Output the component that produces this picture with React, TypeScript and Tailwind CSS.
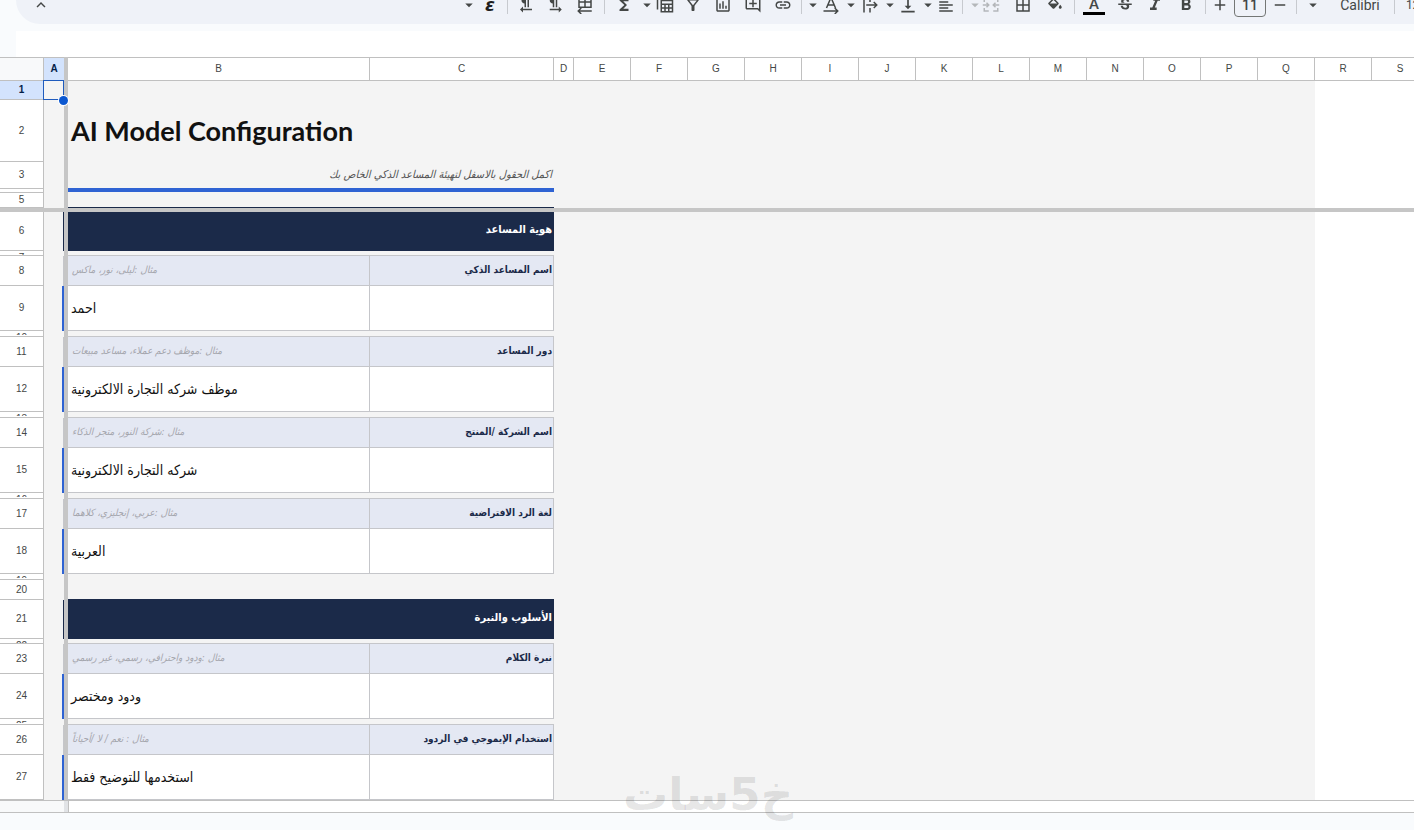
import type { ReactNode } from 'react';
import clsx from 'clsx';
import {
  MdAdd,
  MdArrowDropDown,
  MdBorderAll,
  MdFormatAlignRight,
  MdFormatBold,
  MdFormatItalic,
  MdFormatTextdirectionLToR,
  MdFormatTextdirectionRToL,
  MdFunctions,
  MdKeyboardArrowUp,
  MdLink,
  MdOutlineAddComment,
  MdOutlineFilterAlt,
  MdOutlineInsertChart,
  MdRemove,
  MdStrikethroughS,
  MdVerticalAlignBottom
} from 'react-icons/md';

type RowKind = 'blank' | 'title' | 'subtitle' | 'rule' | 'preSection' | 'section' | 'preHint' | 'hint' | 'value';

type SheetRow = {
  n: number;
  h: string;
  kind: RowKind;
  text?: string;
  label?: string;
};

const frozenRows: SheetRow[] = [
  { n: 1, h: 'h-[19px]', kind: 'blank' },
  { n: 2, h: 'h-[62px]', kind: 'title', text: 'AI Model Configuration' },
  { n: 3, h: 'h-[27px]', kind: 'subtitle', text: 'اكمل الحقول بالاسفل لتهيئة المساعد الذكي الخاص بك' },
  { n: 4, h: 'h-1', kind: 'rule' },
  { n: 5, h: 'h-[15px]', kind: 'preSection' }
];

const bodyRows: SheetRow[] = [
  { n: 6, h: 'h-[39px]', kind: 'section', text: 'هوية المساعد' },
  { n: 7, h: 'h-[5px]', kind: 'preHint' },
  { n: 8, h: 'h-[30px]', kind: 'hint', text: 'مثال :ليلى، نور، ماكس', label: 'اسم المساعد الذكي' },
  { n: 9, h: 'h-[45px]', kind: 'value', text: 'احمد' },
  { n: 10, h: 'h-1.5', kind: 'preHint' },
  { n: 11, h: 'h-[30px]', kind: 'hint', text: 'مثال :موظف دعم عملاء، مساعد مبيعات', label: 'دور المساعد' },
  { n: 12, h: 'h-[45px]', kind: 'value', text: 'موظف شركه التجارة الالكترونية' },
  { n: 13, h: 'h-1.5', kind: 'preHint' },
  { n: 14, h: 'h-[30px]', kind: 'hint', text: 'مثال :شركة النور، متجر الذكاء', label: 'اسم الشركة /المنتج' },
  { n: 15, h: 'h-[45px]', kind: 'value', text: 'شركه التجارة الالكترونية' },
  { n: 16, h: 'h-1.5', kind: 'preHint' },
  { n: 17, h: 'h-[30px]', kind: 'hint', text: 'مثال :عربي، إنجليزي، كلاهما', label: 'لغة الرد الافتراضية' },
  { n: 18, h: 'h-[45px]', kind: 'value', text: 'العربية' },
  { n: 19, h: 'h-1.5', kind: 'blank' },
  { n: 20, h: 'h-5', kind: 'preSection' },
  { n: 21, h: 'h-[39px]', kind: 'section', text: 'الأسلوب والنبرة' },
  { n: 22, h: 'h-[5px]', kind: 'preHint' },
  { n: 23, h: 'h-[30px]', kind: 'hint', text: 'مثال :ودود واحترافي، رسمي، غير رسمي', label: 'نبرة الكلام' },
  { n: 24, h: 'h-[45px]', kind: 'value', text: 'ودود ومختصر' },
  { n: 25, h: 'h-1.5', kind: 'preHint' },
  { n: 26, h: 'h-[30px]', kind: 'hint', text: 'مثال : نعم / لا /أحياناً', label: 'استخدام الإيموجي في الردود' },
  { n: 27, h: 'h-[45px]', kind: 'value', text: 'استخدمها للتوضيح فقط' }
];

const columns = 'EFGHIJKLMNOPQRS'.split('');

const arabic = "font-['DejaVu_Sans_Condensed','DejaVu_Sans',sans-serif]";

function Tool({ label, w, children }: { label: string; w: string; children: ReactNode }) {
  return (
    <button type="button" aria-label={label} className={clsx('flex h-7 shrink-0 items-center justify-center', w)}>
      {children}
    </button>
  );
}

function Divider({ w }: { w: string }) {
  return (
    <span className={clsx('flex h-[18px] shrink-0 justify-center', w)}>
      <span className="w-px bg-[#c7cacf]" />
    </span>
  );
}

function Arrow({ w, label, muted = false }: { w: string; label: string; muted?: boolean }) {
  return (
    <Tool label={label} w={w}>
      <MdArrowDropDown className={clsx('size-[18px] shrink-0', muted && 'text-[#b4b7ba]')} />
    </Tool>
  );
}

function Glyph({ children, muted = false }: { children: ReactNode; muted?: boolean }) {
  return (
    <svg
      viewBox="0 0 24 24"
      fill="none"
      stroke="currentColor"
      strokeWidth="2"
      className={clsx('size-[18px] shrink-0', muted && 'text-[#b4b7ba]')}
    >
      {children}
    </svg>
  );
}

function Toolbar() {
  const icon = 'size-[18px] shrink-0';
  return (
    <div className="ml-4 h-6 overflow-hidden rounded-bl-3xl bg-[#eff2f8] text-[#444746]">
      <div className="-mt-[9px] flex h-7 items-center">
        <div className="ml-4 shrink-0">
          <Tool label="Hide the menus" w="w-[18px]">
            <MdKeyboardArrowUp className="size-[18px]" />
          </Tool>
        </div>
        <div className="ml-[410px] flex shrink-0 items-center">
          <Arrow label="Input tools menu" w="w-[18px]" />
          <Tool label="Input tools" w="w-6">
            <span className="font-['DejaVu_Sans',sans-serif] text-lg font-bold italic leading-5 text-[#1f1f1f]">ε</span>
          </Tool>
          <Divider w="w-2.5" />
          <Tool label="Right to left" w="w-7">
            <MdFormatTextdirectionRToL className={icon} />
          </Tool>
          <Tool label="Left to right" w="w-[30px]">
            <MdFormatTextdirectionLToR className={icon} />
          </Tool>
          <Tool label="Sheet direction" w="w-[30px]">
            <Glyph>
              <path d="M4 0v15h16V0M4 8h16M12 0v15M3 20h18M7 16l-4 4 4 4" />
            </Glyph>
          </Tool>
          <Divider w="w-2" />
          <Tool label="Functions" w="w-8">
            <MdFunctions className={icon} />
          </Tool>
          <Arrow label="Table menu" w="w-3.5" />
          <Tool label="Tables" w="w-[22px]">
            <Glyph>
              <path d="M2 0v18M7 6h15v15H7zM7 11h15M7 16h15M12 11v10M17 11v10" />
            </Glyph>
          </Tool>
          <Tool label="Create a filter" w="w-[34px]">
            <MdOutlineFilterAlt className={icon} />
          </Tool>
          <Tool label="Insert chart" w="w-[26px]">
            <MdOutlineInsertChart className={icon} />
          </Tool>
          <Tool label="Insert comment" w="w-[34px]">
            <MdOutlineAddComment className={icon} />
          </Tool>
          <Tool label="Insert link" w="w-[26px]">
            <MdLink className={icon} />
          </Tool>
          <Divider w="w-2.5" />
          <Arrow label="Rotation menu" w="w-3.5" />
          <Tool label="Text rotation" w="w-[22px]">
            <Glyph>
              <path d="M6 16 12 2l6 14M8 12h8M2 20h18M17 16l4 4-4 4" />
            </Glyph>
          </Tool>
          <Arrow label="Wrapping menu" w="w-[18px]" />
          <Tool label="Text wrapping" w="w-5">
            <Glyph>
              <path d="M4 2v20M12 2v6M12 16v6M7 12h14M17 8l4 4-4 4" />
            </Glyph>
          </Tool>
          <Arrow label="Vertical align menu" w="w-5" />
          <Tool label="Vertical align" w="w-4">
            <MdVerticalAlignBottom className="size-5 shrink-0" />
          </Tool>
          <Arrow label="Horizontal align menu" w="w-6" />
          <Tool label="Horizontal align" w="w-3">
            <MdFormatAlignRight className={clsx(icon, '-scale-x-100')} />
          </Tool>
          <Divider w="w-5" />
          <Arrow label="Merge menu" w="w-1.5" muted />
          <Tool label="Merge cells" w="w-[26px]">
            <Glyph muted>
              <path d="M3 8V4h6M15 4h6v4M3 16v4h6M15 20h6v-4M1 12h8M6 9l3 3-3 3M23 12h-8M18 9l-3 3 3 3" />
            </Glyph>
          </Tool>
          <Tool label="Borders" w="w-[38px]">
            <MdBorderAll className={icon} />
          </Tool>
          <Tool label="Fill colour" w="w-[26px]">
            <svg viewBox="0 0 24 24" fill="currentColor" className={icon}>
              <path d="M16.56 8.94 7.62 0 6.21 1.41l2.38 2.38-5.15 5.15a1.49 1.49 0 0 0 0 2.12l5.5 5.5c.29.29.68.44 1.06.44s.77-.15 1.06-.44l5.5-5.5c.59-.58.59-1.53 0-2.12zM5.21 10 10 5.21 14.79 10H5.21zM19 11.5s-2 2.17-2 3.5c0 1.1.9 2 2 2s2-.9 2-2c0-1.33-2-3.5-2-3.5z" />
            </svg>
          </Tool>
          <Divider w="w-3" />
          <Tool label="Text colour" w="w-7">
            <span className="w-[22px] border-b-3 border-black text-center font-['Roboto',sans-serif] text-[15px] font-medium leading-4">A</span>
          </Tool>
          <Tool label="Strikethrough" w="w-[34px]">
            <MdStrikethroughS className={icon} />
          </Tool>
          <Tool label="Italic" w="w-[26px]">
            <MdFormatItalic className="size-5 shrink-0" />
          </Tool>
          <Tool label="Bold" w="w-9">
            <MdFormatBold className="size-5 shrink-0" />
          </Tool>
          <Divider w="w-0.5" />
          <Tool label="Increase font size" w="w-7">
            <MdAdd className={icon} />
          </Tool>
          <input
            aria-label="Font size"
            defaultValue="11"
            className="h-6 w-8 rounded border border-[#747775] text-center font-['Roboto',sans-serif] text-sm font-medium outline-none"
          />
          <Tool label="Decrease font size" w="w-7">
            <MdRemove className={icon} />
          </Tool>
          <Divider w="w-1" />
          <Arrow label="Font menu" w="w-[30px]" />
          <Tool label="Font" w="w-16">
            <span className="font-['Roboto',sans-serif] text-sm">Calibri</span>
          </Tool>
          <Divider w="w-1" />
          <Tool label="More formats" w="w-10">
            <span className="font-['Roboto',sans-serif] text-xs">123</span>
          </Tool>
        </div>
      </div>
    </div>
  );
}

function ContentCells({ row }: { row: SheetRow }) {
  switch (row.kind) {
    case 'title':
      return (
        <td colSpan={2} className="bg-[#f4f4f4] pl-[3px] text-left align-middle">
          <h1 className="whitespace-nowrap font-['Lato',sans-serif] text-[27px] font-bold leading-8 text-[#111]">{row.text}</h1>
        </td>
      );
    case 'subtitle':
      return (
        <td colSpan={2} className="border-b border-[#2f63d3] bg-[#f4f4f4] pr-0.5 align-middle">
          <p dir="rtl" className={clsx('whitespace-nowrap text-right text-[11px] italic leading-4 text-[#555]', arabic)}>
            {row.text}
          </p>
        </td>
      );
    case 'rule':
      return <td colSpan={2} className="border-b border-[#f4f4f4] bg-[#2f63d3]" />;
    case 'preSection':
      return <td colSpan={2} className="border-b border-[#1b2a49] bg-[#f4f4f4]" />;
    case 'section':
      return (
        <td colSpan={2} className="bg-[#1b2a49] pb-1 pr-0.5 align-middle">
          <h2 dir="rtl" className={clsx('whitespace-nowrap text-right text-[11px] font-bold leading-4 text-white', arabic)}>
            {row.text}
          </h2>
        </td>
      );
    case 'preHint':
      return (
        <>
          <td className="border-b border-[#c5c6ca] bg-[#f4f4f4]" />
          <td className="border-b border-[#c5c6ca] bg-[#f4f4f4]" />
        </>
      );
    case 'hint':
      return (
        <>
          <td className="border-b border-r border-[#c5c6ca] bg-[#e4e8f3] pb-0.5 pl-1 align-middle">
            <p dir="rtl" className={clsx('whitespace-nowrap text-left text-[10px] italic leading-4 text-[#a4a6ad]', arabic)}>
              {row.text}
            </p>
          </td>
          <td className="border-b border-r border-[#c5c6ca] bg-[#e4e8f3] pb-0.5 pr-px align-middle">
            <p dir="rtl" className={clsx('whitespace-nowrap text-right text-[10px] font-bold leading-4 text-[#1b2a49]', arabic)}>
              {row.label}
            </p>
          </td>
        </>
      );
    case 'value':
      return (
        <>
          <td className="border-b border-r border-[#c5c6ca] bg-white pl-[3px] align-middle">
            <p dir="rtl" className={clsx('whitespace-nowrap text-left text-sm leading-5 text-[#111]', arabic)}>
              {row.text}
            </p>
          </td>
          <td className="border-b border-r border-[#c5c6ca] bg-white" />
        </>
      );
    default:
      return <td colSpan={2} className="bg-[#f4f4f4]" />;
  }
}

function Row({ row }: { row: SheetRow }) {
  const selected = row.n === 1;
  // collapsed rows only show the top edge of their number
  const thin = row.h === 'h-1.5' || row.h === 'h-[5px]';
  return (
    <tr className={row.h}>
      <th
        scope="row"
        aria-label={`Row ${row.n}`}
        className={clsx(
          'border-b border-r border-[#c0c0c0] text-[10px]',
          thin ? 'align-top' : 'align-middle',
          selected ? 'bg-[#d3e3fd] font-bold text-[#041e49]' : 'bg-white font-normal text-[#444746]'
        )}
      >
        {thin && <div className="h-1 overflow-hidden leading-[14px]">{row.n}</div>}
        {!thin && row.kind !== 'rule' && <div className="leading-3">{row.n}</div>}
      </th>
      <td
        className={clsx(
          'bg-[#f4f4f4]',
          row.kind === 'value' && 'border-r-2 border-[#2f63d3]',
          row.kind === 'section' && 'border-r border-[#1b2a49]',
          row.kind === 'hint' && 'border-r border-[#c5c6ca]',
          selected && 'relative'
        )}
      >
        {selected && (
          <>
            <span className="absolute -left-px -top-px bottom-0 right-0 border border-[#1f5bbd]" />
            <span className="absolute -bottom-[5px] -right-1 z-10 size-[9px] rounded-full bg-[#0b57d0] ring-1 ring-white" />
          </>
        )}
      </td>
      <td className="bg-[#c6c6c6]" />
      <ContentCells row={row} />
      <td colSpan={14} className="bg-[#f4f4f4]" />
      <td colSpan={2} className="bg-white" />
    </tr>
  );
}

function Sheet() {
  const head = 'border-y border-r border-[#c0c0c0] bg-white font-normal';
  return (
    <table className="w-full table-fixed border-separate border-spacing-0 font-['Liberation_Sans',sans-serif]">
      <colgroup>
        <col className="w-11" />
        <col className="w-5" />
        <col className="w-1" />
        <col className="w-[302px]" />
        <col className="w-[184px]" />
        <col className="w-5" />
        {columns.map((c) => (
          <col key={c} className="w-[57px]" />
        ))}
      </colgroup>
      <thead>
        <tr className="h-6 text-[10px] leading-3 text-[#444746]">
          <td className="border-y border-r border-[#c0c0c0] bg-[#f8f9fa]" />
          <th scope="col" className="border-y border-[#c0c0c0] bg-[#d3e3fd] font-bold text-[#041e49]">A</th>
          <td className="bg-[#c6c6c6]" />
          <th scope="col" className={head}>B</th>
          <th scope="col" className={head}>C</th>
          <th scope="col" className={head}>D</th>
          {columns.map((c) => (
            <th key={c} scope="col" className={head}>{c}</th>
          ))}
        </tr>
      </thead>
      <tbody>
        {frozenRows.map((row) => (
          <Row key={row.n} row={row} />
        ))}
        <tr className="h-1">
          <td colSpan={21} className="bg-[#c6c6c6]" />
        </tr>
        {bodyRows.map((row) => (
          <Row key={row.n} row={row} />
        ))}
        <tr className="h-[13px]">
          <td colSpan={2} className="border-y border-[#c0c0c0] bg-[#f8f9fa]" />
          <td className="border-y border-[#c0c0c0] bg-[#e1e3e6]" />
          <td colSpan={18} className="border-y border-l border-[#c0c0c0] bg-white" />
        </tr>
      </tbody>
    </table>
  );
}

export default function App() {
  return (
    <div className="min-h-screen overflow-hidden bg-[#f9fbfd]">
      <Toolbar />
      <div className="ml-4 mt-[7px] h-[26px] bg-white" />
      <main className="relative">
        <Sheet />
        <div
          dir="rtl"
          className="pointer-events-none absolute -bottom-2 left-[620px] flex w-44 items-center justify-center font-['DejaVu_Sans',sans-serif] text-[45px] font-bold leading-[52px] text-black/10"
        >
          <span>خ</span>
          <span>5</span>
          <span>سات</span>
        </div>
      </main>
    </div>
  );
}
